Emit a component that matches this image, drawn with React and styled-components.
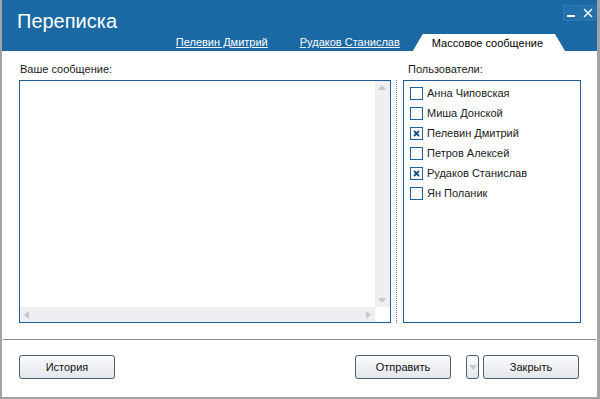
import React from 'react';
import styled, { createGlobalStyle } from 'styled-components';

// --> Global styles <--
const GlobalStyle = createGlobalStyle`
  html, body {
    margin: 0;
    padding: 0;
    background: #ffffff;
  }
  body {
    font-family: "Liberation Sans", Arial, sans-serif;
    font-size: 11px;
    color: #1a1a1a;
  }
`;

// --> Styled components start <--
const Window = styled.div`
  width: 600px;
  height: 399px;
  box-sizing: border-box;
  display: flex;
  flex-direction: column;
  background: #ffffff;
  border: 2px solid #a3a3a3;
  border-top: none;
  border-right-width: 3px;
  overflow: hidden;
`;

const Header = styled.div`
  height: 51px;
  flex-shrink: 0;
  margin: 0 -3px 0 -2px;
  background: #1b69a4;
  display: flex;
  flex-direction: column;
  justify-content: space-between;
`;

const TitleRow = styled.div`
  display: flex;
  justify-content: space-between;
  align-items: flex-start;
  padding: 5px 4px 0 17px;
`;

const Title = styled.div`
  color: #ffffff;
  font-size: 20px;
  line-height: 26px;
  margin-top: 3px;
`;

const Controls = styled.div`
  display: flex;
  gap: 1px;
`;

const ControlButton = styled.div`
  width: 14px;
  height: 14px;
  border: 1px solid #3478b2;
  background: #2270ab;
  display: flex;
  align-items: center;
  justify-content: center;
`;

const Tabs = styled.div`
  display: flex;
  justify-content: flex-end;
  align-items: flex-end;
  padding-right: 35px;
  height: 17px;
`;

const Tab = styled.div`
  padding: 0 16px;
  height: 17px;
  line-height: 17px;
  color: #ffffff;
  text-decoration: underline;
  cursor: pointer;
`;

const ActiveTab = styled.div`
  height: 17px;
  line-height: 18px;
  padding: 0 22px 0 19px;
  margin-left: -3px;
  background: #ffffff;
  color: #000000;
  clip-path: polygon(0 100%, 10px 0, calc(100% - 10px) 0, 100% 100%);
`;

const Content = styled.div`
  display: flex;
  padding: 12px 16px 0 17px;
  flex-shrink: 0;
`;

const Column = styled.div`
  display: flex;
  flex-direction: column;
  width: ${p => p.w}px;
`;

const Label = styled.div`
  height: 17px;
  line-height: 12px;
  padding-left: ${p => p.indent || 1}px;
`;

const Box = styled.div`
  height: 243px;
  box-sizing: border-box;
  border: 1px solid #1d5e96;
  background: #ffffff;
  position: relative;
`;

const Separator = styled.div`
  width: 0;
  margin: 17px 6px 0 5px;
  height: 243px;
  border-left: 1px dotted #7a7a7a;
`;

const VScroll = styled.div`
  position: absolute;
  top: 0;
  right: 0;
  bottom: 15px;
  width: 15px;
  background: #eeeff2;
  display: flex;
  flex-direction: column;
  justify-content: space-between;
  align-items: center;
  padding: 4px 0;
  box-sizing: border-box;
`;

const HScroll = styled.div`
  position: absolute;
  left: 0;
  right: 15px;
  bottom: 0;
  height: 15px;
  background: #eeeff2;
  display: flex;
  justify-content: space-between;
  align-items: center;
  padding: 0 4px;
  box-sizing: border-box;
`;

const Arrow = styled.div`
  width: 0;
  height: 0;
  border: 4px solid transparent;
  ${p => p.dir === 'up' && 'border-bottom: 5px solid #c6c8cc; border-top-width: 0;'}
  ${p => p.dir === 'down' && 'border-top: 5px solid #c6c8cc; border-bottom-width: 0;'}
  ${p => p.dir === 'left' && 'border-right: 5px solid #c6c8cc; border-left-width: 0;'}
  ${p => p.dir === 'right' && 'border-left: 5px solid #c6c8cc; border-right-width: 0;'}
`;

const UserList = styled.div`
  display: flex;
  flex-direction: column;
  padding: 2px 0 0 6px;
`;

const UserRow = styled.label`
  display: flex;
  align-items: center;
  height: 20px;
  gap: 4px;
`;

const Check = styled.span`
  width: 11px;
  height: 11px;
  border: 1px solid #1d5e96;
  background: #ffffff;
  display: flex;
  align-items: center;
  justify-content: center;
`;

const Rule = styled.div`
  height: 1px;
  background: #8e8e8e;
  margin: 16px 1px 0 1px;
  flex-shrink: 0;
`;

const Footer = styled.div`
  display: flex;
  align-items: center;
  padding: 15px 18px 0 17px;
`;

const Button = styled.button`
  width: ${p => p.w || 96}px;
  height: 24px;
  border: 1px solid #4d6070;
  border-radius: 3px;
  background: linear-gradient(#fbfbfc, #e3e6eb);
  font-family: "Liberation Sans", Arial, sans-serif;
  font-size: 11px;
  color: #111111;
  padding: 0;
  display: flex;
  align-items: center;
  justify-content: center;
  margin-left: ${p => p.ml || 0}px;
  cursor: pointer;
`;

const Spacer = styled.div`
  flex: 1;
`;
// --> Styled components end <--

const users = [
  { name: 'Анна Чиповская', checked: false },
  { name: 'Миша Донской', checked: false },
  { name: 'Пелевин Дмитрий', checked: true },
  { name: 'Петров Алексей', checked: false },
  { name: 'Рудаков Станислав', checked: true },
  { name: 'Ян Поланик', checked: false },
];

const Cross = () => (
  <svg width="7" height="7" viewBox="0 0 7 7">
    <path d="M1 1 L6 6 M6 1 L1 6" stroke="#1d4f80" strokeWidth="1.8" />
  </svg>
);

export default function App() {
  return (
    <>
      <GlobalStyle />
      <Window>
        <Header>
          <TitleRow>
            <Title>Переписка</Title>
            <Controls>
              <ControlButton>
                <svg width="10" height="10" viewBox="0 0 10 10">
                  <rect x="1" y="7" width="8" height="2" fill="#ffffff" />
                </svg>
              </ControlButton>
              <ControlButton>
                <svg width="10" height="10" viewBox="0 0 10 10">
                  <path d="M1 1 L9 9 M9 1 L1 9" stroke="#ffffff" strokeWidth="1.5" />
                </svg>
              </ControlButton>
            </Controls>
          </TitleRow>
          <Tabs>
            <Tab>Пелевин Дмитрий</Tab>
            <Tab>Рудаков Станислав</Tab>
            <ActiveTab>Массовое сообщение</ActiveTab>
          </Tabs>
        </Header>

        <Content>
          <Column w={374}>
            <Label>Ваше сообщение:</Label>
            <Box>
              <VScroll>
                <Arrow dir="up" />
                <Arrow dir="down" />
              </VScroll>
              <HScroll>
                <Arrow dir="left" />
                <Arrow dir="right" />
              </HScroll>
            </Box>
          </Column>
          <Separator />
          <Column w={179}>
            <Label indent={5}>Пользователи:</Label>
            <Box>
              <UserList>
                {users.map(u => (
                  <UserRow key={u.name}>
                    <Check>{u.checked && <Cross />}</Check>
                    {u.name}
                  </UserRow>
                ))}
              </UserList>
            </Box>
          </Column>
        </Content>

        <Rule />
        <Footer>
          <Button>История</Button>
          <Spacer />
          <Button>Отправить</Button>
          <Button w={13} ml={15}>
            <Arrow dir="down" />
          </Button>
          <Button ml={4}>Закрыть</Button>
        </Footer>
      </Window>
    </>
  );
}
